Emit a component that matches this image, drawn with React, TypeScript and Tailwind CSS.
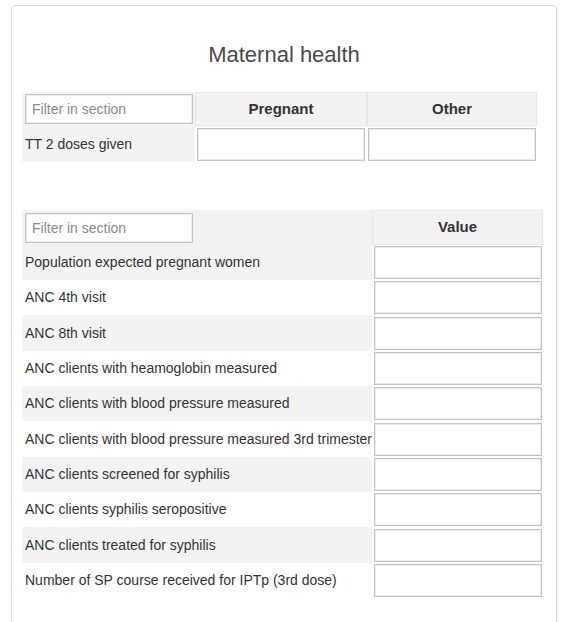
import React from "react";

const rows = [
  "Population expected pregnant women",
  "ANC 4th visit",
  "ANC 8th visit",
  "ANC clients with heamoglobin measured",
  "ANC clients with blood pressure measured",
  "ANC clients with blood pressure measured 3rd trimester",
  "ANC clients screened for syphilis",
  "ANC clients syphilis seropositive",
  "ANC clients treated for syphilis",
  "Number of SP course received for IPTp (3rd dose)",
];

function ValueInput({ w }: { w: string }) {
  return (
    <input
      type="text"
      className={`${w} h-[33px] border border-[#c4c4c4] bg-white shadow-[inset_0_0_0_1px_#ececec] outline-none`}
    />
  );
}

function FilterInput() {
  return (
    <input
      type="text"
      placeholder="Filter in section"
      className="w-[168px] h-[30px] border border-[#c4c4c4] bg-white pl-[6px] text-[14px] text-[#333] placeholder:text-[#8a8a8a] shadow-[inset_0_0_0_1px_#ececec] outline-none"
    />
  );
}

export default function App() {
  return (
    <div
      className="min-h-[622px] bg-white pt-[5px]"
      style={{ fontFamily: '"Liberation Sans", Arial, sans-serif' }}
    >
      <div className="ml-[11px] w-[546px] rounded-[4px] border border-[#dcdcdc] shadow-[1px_1px_2px_rgba(0,0,0,0.08)] pt-[37px] pb-[60px]">
        <h2 className="text-center text-[22px] leading-[24px] text-[#4a4a4a] font-normal mb-[25px]">
          Maternal health
        </h2>

        {/* Table 1 */}
        <div className="ml-[10px] grid grid-cols-[173px_172px_170px]">
          <div className="h-[34px] bg-[#f3f3f3] flex items-center pl-[3px]">
            <FilterInput />
          </div>
          <div className="h-[34px] bg-[#f3f3f3] border border-[#e6e6e6] flex items-center justify-center text-[15px] font-bold text-[#333]">
            Pregnant
          </div>
          <div className="h-[34px] bg-[#f3f3f3] border border-[#e6e6e6] flex items-center justify-center text-[15px] font-bold text-[#333]">
            Other
          </div>
          <div className="h-[36px] bg-[#f3f3f3] flex items-center pl-[3px] text-[14px] text-[#333]">
            TT 2 doses given
          </div>
          <div className="h-[36px] flex items-center pl-[2px]">
            <ValueInput w="w-[168px]" />
          </div>
          <div className="h-[36px] flex items-center pl-[1px]">
            <ValueInput w="w-[168px]" />
          </div>
        </div>

        {/* Table 2 */}
        <div className="ml-[10px] mt-[48px] grid grid-cols-[350px_171px]">
          <div className="h-[35px] bg-[#f3f3f3] flex items-center pl-[3px]">
            <FilterInput />
          </div>
          <div className="h-[35px] bg-[#f3f3f3] border border-[#e6e6e6] flex items-center justify-center text-[15px] font-bold text-[#333]">
            Value
          </div>
          {rows.map((r, i) => (
            <React.Fragment key={r}>
              <div
                className={`${i % 3 === 2 ? "h-[36px]" : "h-[35px]"} flex items-center pl-[3px] text-[14px] text-[#333] whitespace-nowrap ${
                  i % 2 === 0 ? "bg-[#f3f3f3]" : "bg-white"
                }`}
              >
                {r}
              </div>
              <div className={`${i % 3 === 2 ? "h-[36px]" : "h-[35px]"} flex items-center pl-[2px]`}>
                <ValueInput w="w-[168px]" />
              </div>
            </React.Fragment>
          ))}
        </div>
      </div>
    </div>
  );
}
